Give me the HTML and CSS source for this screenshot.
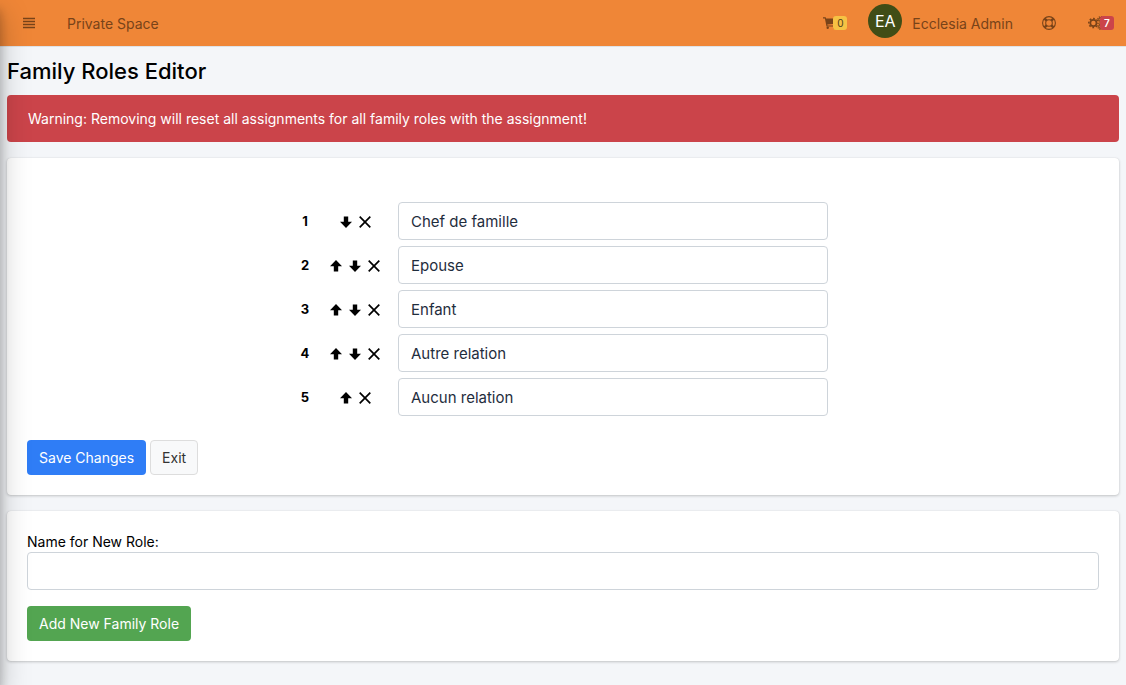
FILE: index.html
```html
<!DOCTYPE html>
<html lang="en">

<head>
    <meta charset="utf-8">
    <meta name="viewport" content="width=device-width, initial-scale=1">
    <title>Family Roles Editor</title>
    <link rel="stylesheet" href="styles.css">
</head>

<body>
    <!-- Icons -->
    <svg class="sprite" aria-hidden="true">
        <symbol id="icon-up" viewBox="0 0 12 12">
            <path d="M6 0 12 6.2H8.2V11.5H3.8V6.2H0Z" />
        </symbol>
        <symbol id="icon-down" viewBox="0 0 12 12">
            <path d="M6 12 0 5.8H3.8V.5H8.2V5.8H12Z" />
        </symbol>
        <symbol id="icon-remove" viewBox="0 0 12 12">
            <path d="M.7.7 11.3 11.3M11.3.7.7 11.3" fill="none" stroke="currentColor" stroke-width="1.7" />
        </symbol>
    </svg>

    <nav class="navbar">
        <button type="button" class="nav-button nav-menu" aria-label="Toggle menu">
            <svg width="12" height="12" viewBox="0 0 12 12"><path d="M0 1.5H12M0 4.5H12M0 7.5H12M0 10.5H12" stroke="currentColor" stroke-width="1.5" /></svg>
        </button>
        <a href="#" class="nav-link">Private Space</a>
        <div class="nav-right">
            <a href="#" class="nav-icon nav-cart" aria-label="Cart">
                <svg width="14" height="12" viewBox="0 0 14 12" fill="currentColor">
                    <path d="M0 .3H2.7L3 1.5H14L12.8 6.7 4.3 7.4 4.5 8.4H12.3V9.5H3.5L1.9 1.4H0Z" />
                    <circle cx="4.7" cy="10.8" r="1.2" />
                    <circle cx="11.4" cy="10.8" r="1.2" />
                </svg>
                <span class="badge badge-warning">0</span>
            </a>
            <a href="#" class="nav-user"><span class="avatar">EA</span>Ecclesia Admin</a>
            <a href="#" class="nav-icon nav-help" aria-label="Help">
                <svg width="14" height="14" viewBox="0 0 14 14" fill="none" stroke="currentColor">
                    <circle cx="7" cy="7" r="6.4" stroke-width="1.1" />
                    <circle cx="7" cy="7" r="3.3" stroke-width="1.1" />
                    <path d="M2.6 2.6 4.7 4.7M11.4 2.6 9.3 4.7M2.6 11.4 4.7 9.3M11.4 11.4 9.3 9.3" stroke-width="2.6" />
                </svg>
            </a>
            <a href="#" class="nav-icon nav-settings" aria-label="Settings">
                <svg width="16" height="14" viewBox="0 0 16 14" fill="none" stroke="currentColor">
                    <circle cx="5.4" cy="7" r="3.1" stroke-width="1.7" />
                    <circle cx="5.4" cy="7" r="4.6" stroke-width="1.5" stroke-dasharray="1.8 1.813" stroke-dashoffset="0.9" />
                    <circle cx="12.6" cy="3.4" r="1.8" stroke-width="1.1" />
                    <circle cx="12.6" cy="3.4" r="2.8" stroke-width="1.1" stroke-dasharray="1.1 1.1" />
                    <circle cx="12.6" cy="10.6" r="1.8" stroke-width="1.1" />
                    <circle cx="12.6" cy="10.6" r="2.8" stroke-width="1.1" stroke-dasharray="1.1 1.1" />
                </svg>
                <span class="badge badge-danger">7</span>
            </a>
        </div>
    </nav>

    <main class="content">
        <h1>Family Roles Editor</h1>

        <div class="alert">Warning: Removing will reset all assignments for all family roles with the assignment!</div>

        <form class="card roles-form">
            <table class="roles">
                <tr>
                    <th scope="row" class="role-number">1</th>
                    <td class="role-actions">
                        <button type="button" aria-label="Move down"><svg><use href="#icon-down" /></svg></button>
                        <button type="button" aria-label="Remove"><svg><use href="#icon-remove" /></svg></button>
                    </td>
                    <td><input type="text" class="form-control" aria-label="Role 1" value="Chef de famille"></td>
                </tr>
                <tr>
                    <th scope="row" class="role-number">2</th>
                    <td class="role-actions">
                        <button type="button" aria-label="Move up"><svg><use href="#icon-up" /></svg></button>
                        <button type="button" aria-label="Move down"><svg><use href="#icon-down" /></svg></button>
                        <button type="button" aria-label="Remove"><svg><use href="#icon-remove" /></svg></button>
                    </td>
                    <td><input type="text" class="form-control" aria-label="Role 2" value="Epouse"></td>
                </tr>
                <tr>
                    <th scope="row" class="role-number">3</th>
                    <td class="role-actions">
                        <button type="button" aria-label="Move up"><svg><use href="#icon-up" /></svg></button>
                        <button type="button" aria-label="Move down"><svg><use href="#icon-down" /></svg></button>
                        <button type="button" aria-label="Remove"><svg><use href="#icon-remove" /></svg></button>
                    </td>
                    <td><input type="text" class="form-control" aria-label="Role 3" value="Enfant"></td>
                </tr>
                <tr>
                    <th scope="row" class="role-number">4</th>
                    <td class="role-actions">
                        <button type="button" aria-label="Move up"><svg><use href="#icon-up" /></svg></button>
                        <button type="button" aria-label="Move down"><svg><use href="#icon-down" /></svg></button>
                        <button type="button" aria-label="Remove"><svg><use href="#icon-remove" /></svg></button>
                    </td>
                    <td><input type="text" class="form-control" aria-label="Role 4" value="Autre relation"></td>
                </tr>
                <tr>
                    <th scope="row" class="role-number">5</th>
                    <td class="role-actions">
                        <button type="button" aria-label="Move up"><svg><use href="#icon-up" /></svg></button>
                        <button type="button" aria-label="Remove"><svg><use href="#icon-remove" /></svg></button>
                    </td>
                    <td><input type="text" class="form-control" aria-label="Role 5" value="Aucun relation"></td>
                </tr>
            </table>
            <div class="buttons">
                <button type="submit" class="btn btn-primary">Save Changes</button>
                <button type="button" class="btn btn-default">Exit</button>
            </div>
        </form>

        <form class="card">
            <label for="new-role">Name for New Role:</label>
            <input type="text" class="form-control new-role" id="new-role">
            <button type="submit" class="btn btn-success">Add New Family Role</button>
        </form>
    </main>
</body>

</html>
```

FILE: styles.css
```css
* {
    box-sizing: border-box;
}

body {
    margin: 0;
    font-family: Inter, "Liberation Sans", sans-serif;
    font-size: 14px;
    line-height: 21px;
    color: #000;
    background-color: #f4f6f9;
}

/* Shadow of the collapsed sidebar */
body::before {
    content: "";
    position: fixed;
    z-index: 2;
    top: 0;
    bottom: 0;
    left: -250px;
    width: 250px;
    box-shadow: 0 14px 28px rgba(0, 0, 0, 0.25), 0 10px 10px rgba(0, 0, 0, 0.22);
    pointer-events: none;
}

button,
input {
    font-family: inherit;
}

.sprite {
    display: none;
}

/* Navbar */
.navbar {
    display: flex;
    align-items: center;
    height: 47px;
    padding: 0 12px 0 23px;
    background-color: #ef8637;
    border-bottom: 1px solid #dee2e6;
}

.navbar a,
.nav-button {
    color: #784319;
    text-decoration: none;
}

.navbar svg {
    display: block;
}

.nav-button {
    padding: 0;
    background: none;
    border: none;
    cursor: pointer;
}

.nav-menu {
    margin-right: 32px;
}

.nav-right {
    display: flex;
    align-items: center;
    margin-left: auto;
}

.nav-icon {
    display: flex;
    align-items: center;
}

.nav-cart {
    margin-right: 21px;
}

.nav-user {
    display: flex;
    align-items: center;
    gap: 10px;
    margin-right: 29px;
}

.avatar {
    width: 34px;
    height: 34px;
    margin-bottom: 4px;
    border-radius: 50%;
    background-color: #414d16;
    color: #fff;
    font-size: 16px;
    line-height: 34px;
    text-align: center;
}

.nav-help {
    margin-right: 32px;
}

.badge {
    position: relative;
    width: 14px;
    margin-left: -4px;
    border-radius: 3px;
    font-size: 10px;
    line-height: 14px;
    text-align: center;
}

.badge-warning {
    background-color: #f6c244;
    color: #4f3f1b;
}

.badge-danger {
    background-color: #cb444a;
    color: #fff;
    font-weight: 600;
}

/* Page */
.content {
    padding: 10px 7px;
}

h1 {
    margin: 0 0 10px;
    font-size: 22px;
    line-height: 28px;
    font-weight: 500;
}

.alert {
    margin-bottom: 16px;
    padding: 13px 21px;
    border-radius: 4px;
    background-color: #cb444a;
    color: #fff;
}

.card {
    margin-bottom: 16px;
    padding: 20px;
    border-radius: 4px;
    background-color: #fff;
    box-shadow: 0 0 1px rgba(0, 0, 0, 0.13), 0 1px 3px rgba(0, 0, 0, 0.2);
}

.roles-form {
    padding-top: 41px;
}

/* Roles */
.roles {
    width: 50%;
    margin: 0 auto 21px;
    table-layout: fixed;
    border-collapse: collapse;
}

.roles th,
.roles td {
    padding: 3px;
}

.roles .role-number {
    width: 20px;
    padding: 0;
    font-size: 13px;
    font-weight: 700;
    text-align: center;
}

.roles .role-actions {
    width: 80px;
    padding: 3px 0 0;
    text-align: center;
    font-size: 0;
}

.role-actions button {
    width: 19px;
    padding: 0;
    background: none;
    border: none;
    color: #000;
    vertical-align: middle;
    cursor: pointer;
}

.role-actions svg {
    display: block;
    width: 12px;
    height: 12px;
    margin: 0 auto;
}

.form-control {
    display: block;
    width: 100%;
    height: 38px;
    padding: 0 12px;
    border: 1px solid #ced4da;
    border-radius: 4px;
    background-color: #fff;
    color: #1f2d3d;
    font-size: 15px;
}

.form-control:focus {
    outline: none;
    border-color: #80bdff;
}

label {
    display: block;
}

.new-role {
    margin-bottom: 16px;
}

/* Buttons */
.buttons {
    display: flex;
    gap: 4px;
}

.btn {
    height: 35px;
    padding: 0 11px;
    border: 1px solid transparent;
    border-radius: 4px;
    font-size: 14px;
    cursor: pointer;
}

.btn-primary {
    background-color: #2f7df6;
    color: #fff;
}

.btn-default {
    background-color: #f8f9fa;
    border-color: #ddd;
    color: #333;
}

.btn-success {
    background-color: #53a551;
    color: #fff;
}
```
